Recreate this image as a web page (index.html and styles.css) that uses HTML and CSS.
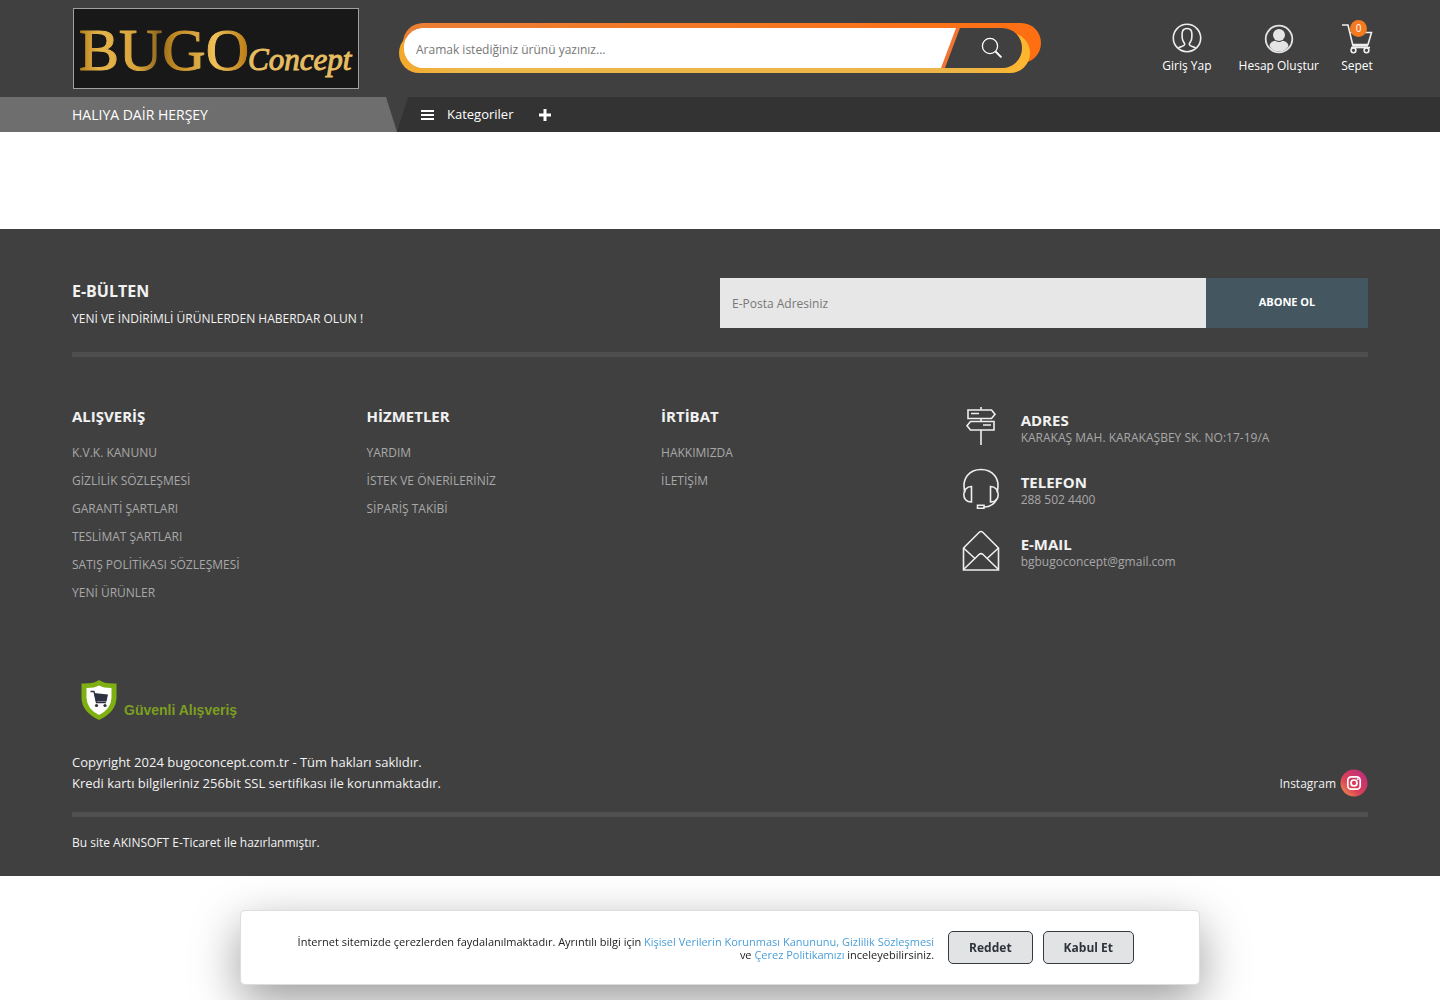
FILE: index.html
```
<!DOCTYPE html>
<html lang="tr">
<head>
<meta charset="utf-8">
<meta name="viewport" content="width=device-width, initial-scale=1">
<title>Bugo Concept</title>
<link rel="stylesheet" href="styles.css">
</head>
<body>
<header class="header">
  <a class="logo" href="#" aria-label="Bugo Concept">
    <svg viewBox="0 0 286 81" width="286" height="81">
      <defs>
        <linearGradient id="gold" x1="0" x2="1">
          <stop offset="0" stop-color="#b47d1c"/><stop offset=".12" stop-color="#e5b54c"/>
          <stop offset=".35" stop-color="#d9a43a"/><stop offset=".47" stop-color="#8f671f"/>
          <stop offset=".56" stop-color="#c08822"/><stop offset=".8" stop-color="#efc158"/>
          <stop offset="1" stop-color="#b87812"/>
        </linearGradient>
      </defs>
      <rect x=".5" y=".5" width="285" height="80" fill="#181818" stroke="#a0a0a0"/>
      <text class="logo-main" x="6" y="62" fill="url(#gold)" stroke="url(#gold)">BUGO</text>
      <text class="logo-sub" x="175" y="62" fill="#e6bd62" stroke="#e6bd62">Concept</text>
    </svg>
  </a>
  <form class="search">
    <div class="search-pill">
      <input class="search-input" type="text" aria-label="Ürün ara" placeholder="Aramak istediğiniz ürünü yazınız...">
      <button class="search-button" type="button" aria-label="Ara">
        <svg width="22" height="22" viewBox="0 0 22 22" fill="none" stroke="#fff" stroke-width="1.3"><circle cx="9" cy="9" r="7.6"/><path d="M14.4 14.4l6 6" stroke-width="2"/></svg>
      </button>
    </div>
  </form>
  <nav class="account" aria-label="Hesap">
    <a class="account-link" href="#">
      <svg width="30" height="32" viewBox="0 0 30 32" fill="none" stroke="#eee" stroke-width="1.6"><circle cx="15" cy="16" r="13.7"/><path d="M6.500 26c1.500-1.800 6-1.500 6.200-3.500.2-1.600-2.200-3-2.400-6C9.600 9.500 10.500 6.500 15 6.500s5.400 3 4.700 10c-.2 3-2.600 4.400-2.400 6 .2 2 4.700 1.700 6.200 3.500"/></svg>
      Giriş Yap
    </a>
    <a class="account-link" href="#">
      <svg width="30" height="32" viewBox="0 0 30 32"><circle cx="15" cy="17" r="13.300" fill="none" stroke="#e4e4e4" stroke-width="1.800"/><circle cx="15" cy="13" r="6" fill="#e4e4e4"/><path d="M5.500 24c.5-3.500 3-5 6-5.300q3.500 2.500 7 0c3 .3 5.500 1.800 6 5.300-2 4-6 5.500-9.500 5.500S7.500 28 5.500 24z" fill="#e4e4e4"/></svg>
      Hesap Oluştur
    </a>
    <a class="account-link cart" href="#">
      <svg width="34" height="32" viewBox="0 0 34 32" fill="none" stroke="#eee" stroke-width="1.600"><path d="M2 3h6l5 21h15M9.500 10.500h22l-3.500 12H12.500"/><path d="M11 25.500h19"/><circle cx="13.500" cy="28.300" r="2.400"/><circle cx="26.500" cy="28.300" r="2.400"/></svg>
      <span class="badge">0</span>
      Sepet
    </a>
  </nav>
</header>
<div class="menubar">
  <div class="slogan">HALIYA DAİR HERŞEY</div>
  <nav class="menu" aria-label="Kategoriler">
    <a class="menu-link" href="#">
      <svg width="13" height="12" viewBox="0 0 13 12" fill="none" stroke="#fff" stroke-width="2"><path d="M0 2h13M0 6h13M0 10h13"/></svg>
      Kategoriler
    </a>
    <a class="menu-more" href="#" aria-label="Tümü">
      <svg width="12" height="12" viewBox="0 0 12 12" fill="none" stroke="#fff" stroke-width="3"><path d="M0 6h12M6 0v12"/></svg>
    </a>
  </nav>
</div>
<main class="content"></main>
<footer class="footer">
  <section class="newsletter">
    <div>
      <h2 class="newsletter-title">E-BÜLTEN</h2>
      <p class="newsletter-text">YENİ VE İNDİRİMLİ ÜRÜNLERDEN HABERDAR OLUN !</p>
    </div>
    <form class="subscribe">
      <input class="subscribe-input" type="email" aria-label="E-Posta Adresiniz" placeholder="E-Posta Adresiniz">
      <button class="subscribe-button" type="button">ABONE OL</button>
    </form>
  </section>
  <div class="columns">
    <section>
      <h3 class="column-title">ALIŞVERİŞ</h3>
      <ul class="links">
        <li><a href="#">K.V.K. KANUNU</a></li>
        <li><a href="#">GİZLİLİK SÖZLEŞMESİ</a></li>
        <li><a href="#">GARANTİ ŞARTLARI</a></li>
        <li><a href="#">TESLİMAT ŞARTLARI</a></li>
        <li><a href="#">SATIŞ POLİTİKASI SÖZLEŞMESİ</a></li>
        <li><a href="#">YENİ ÜRÜNLER</a></li>
      </ul>
    </section>
    <section>
      <h3 class="column-title">HİZMETLER</h3>
      <ul class="links">
        <li><a href="#">YARDIM</a></li>
        <li><a href="#">İSTEK VE ÖNERİLERİNİZ</a></li>
        <li><a href="#">SİPARİŞ TAKİBİ</a></li>
      </ul>
    </section>
    <section>
      <h3 class="column-title">İRTİBAT</h3>
      <ul class="links">
        <li><a href="#">HAKKIMIZDA</a></li>
        <li><a href="#">İLETİŞİM</a></li>
      </ul>
    </section>
    <section class="contacts">
      <div class="contact">
        <svg width="38" height="42" viewBox="0 0 38 42" fill="none" stroke="#eee" stroke-width="1.600"><path d="M19 1v3M19 12.500v3M19 24v15"/><path d="M6 4h23.500l3.500 4.300-3.500 4.200H6zM32 15.500H8.500L5 19.700 8.500 24H32z"/><path d="M9 7.500h8M21 19h8"/></svg>
        <div><h4 class="contact-title">ADRES</h4><p class="contact-text">KARAKAŞ MAH. KARAKAŞBEY SK. NO:17-19/A</p></div>
      </div>
      <div class="contact">
        <svg width="38" height="42" viewBox="0 0 38 42" fill="none" stroke="#eee" stroke-width="1.600"><path d="M3 24.500C-1 10 8 1.500 19 1.500S39 10 35 24.500"/><path d="M9.500 18.500v15.500C4 34 1.800 30.500 1.800 26.500s2.700-8 7.700-8zM28.500 18.500v15.500c5.500 0 7.700-3.500 7.700-7.500s-2.700-8-7.700-8z"/><path d="M34.500 31c-2 5.500-6 7.800-12.500 8"/><path d="M15.500 37.200h6.500v3h-6.500z"/></svg>
        <div><h4 class="contact-title">TELEFON</h4><p class="contact-text">288 502 4400</p></div>
      </div>
      <div class="contact">
        <svg width="38" height="42" viewBox="0 0 38 42" fill="none" stroke="#eee" stroke-width="1.600"><path d="M1.500 18L17 2.500q2-2 4 0L36.500 18v22h-35z"/><path d="M1.500 18l12 11M36.500 18l-12 11M1.500 39.500L17 24.500q2-1.800 4 0l15.500 15"/></svg>
        <div><h4 class="contact-title">E-MAIL</h4><p class="contact-text">bgbugoconcept@gmail.com</p></div>
      </div>
    </section>
  </div>
  <div class="secure">
    <svg width="36" height="40" viewBox="0 0 36 40"><path d="M18 0q5 4 17.500 3.500V18Q35 32 18 40 1 32 .5 18V3.500Q13 4 18 0z" fill="#7fb011"/><path d="M18 5.500q4 2.500 12.500 2.500v10Q30 29 18 35 6 29 5.500 18V8Q14 8 18 5.500z" fill="#fff"/><path d="M9.500 11.500h3.500l2.500 11h9.500" fill="none" stroke="#2c3242" stroke-width="1.300"/><path d="M13 13L27 14.500l-1.500 7H15z" fill="#2c3242"/><circle cx="15.500" cy="25.500" r="1.600" fill="#2c3242"/><circle cx="24" cy="25.500" r="1.600" fill="#2c3242"/></svg>
    <span class="secure-text">Güvenli Alışveriş</span>
  </div>
  <div class="legal">
    <p class="copyright">Copyright 2024 bugoconcept.com.tr - Tüm hakları saklıdır.<br>Kredi kartı bilgileriniz 256bit SSL sertifikası ile korunmaktadır.</p>
    <a class="social" href="#">Instagram
      <svg width="28" height="28" viewBox="0 0 28 28"><defs><linearGradient id="insta" x1="0" y1="1" x2="1" y2="0"><stop offset="0" stop-color="#ee9a4c"/><stop offset=".4" stop-color="#dc4058"/><stop offset="1" stop-color="#b72a80"/></linearGradient></defs><circle cx="14" cy="14" r="13.500" fill="url(#insta)"/><g fill="none" stroke="#fff" stroke-width="1.700"><rect x="7.800" y="7.800" width="12.400" height="12.400" rx="3.500"/><circle cx="14" cy="14" r="3"/></g><circle cx="17.700" cy="10.300" r="1" fill="#fff"/></svg>
    </a>
  </div>
  <p class="credit">Bu site AKINSOFT E-Ticaret ile hazırlanmıştır.</p>
</footer>
<aside class="cookies" aria-label="Çerez bildirimi">
  <p class="cookies-text">İnternet sitemizde çerezlerden faydalanılmaktadır. Ayrıntılı bilgi için <a href="#">Kişisel Verilerin Korunması Kanununu, Gizlilik Sözleşmesi</a><br>ve <a href="#">Çerez Politikamızı</a> inceleyebilirsiniz.</p>
  <button class="cookies-button" type="button">Reddet</button>
  <button class="cookies-button" type="button">Kabul Et</button>
</aside>
</body>
</html>
```
FILE: styles.css
```
* { box-sizing: border-box; }
body {
  margin: 0;
  background: #fff;
  color: #f2f2f2;
  font: 13px/21px "Open Sans", "Noto Sans", sans-serif;
}
h2, h3, h4, p, ul { margin: 0; padding: 0; }
ul { list-style: none; }
a { color: inherit; text-decoration: none; }
svg { display: block; flex: none; }
input, button { font-family: inherit; border: 0; margin: 0; }

.header {
  display: flex;
  align-items: flex-start;
  height: 97px;
  padding: 8px 5% 0;
  background: #404040;
}
.logo { flex: none; margin-left: 1px; }
.logo-main { font: 60px "Liberation Serif", serif; stroke-width: 1px; }
.logo-sub { font: italic 31px "Liberation Serif", serif; stroke-width: 1px; }

/* Two offset pills behind the field: orange up right, yellow down left */
.search {
  display: grid;
  flex: 1;
  max-width: 642px;
  height: 50px;
  margin: 15px 0 0 40px;
}
.search::before, .search::after, .search-pill { grid-area: 1 / 1; border-radius: 25px; }
.search::before, .search::after { content: ""; height: 40px; }
.search::before { margin-left: 4px; background: linear-gradient(90deg, #ea7f35, #ff6f12); }
.search::after { margin: 10px 11px 0 0; background: linear-gradient(90deg, #f4a82a, #edb84a 10%, #edb545 90%, #ffb62e); }
.search-pill {
  z-index: 1;
  display: flex;
  height: 40px;
  margin: 5px 19px 0 5px;
  overflow: hidden;
  background: linear-gradient(90deg, #fff 50%, #f07434 50%);
}
.search-input {
  flex: 1;
  min-width: 0;
  padding: 2px 12px 0;
  background: #fff;
  color: #333;
  font-size: 12px;
  outline: 0;
  clip-path: polygon(0 0, calc(100% - 2px) 0, calc(100% - 17px) 100%, 0 100%);
}
.search-input::placeholder, .subscribe-input::placeholder { color: #777; opacity: 1; }
.search-button {
  display: flex;
  width: 80px;
  margin-left: -16px;
  padding: 0 0 0 39px;
  align-items: center;
  background: #404040;
  clip-path: polygon(18px 0, 100% 0, 100% 100%, 3px 100%);
}

.account { display: flex; gap: 21px; margin: 14px -6px 0 auto; }
.account-link {
  display: flex;
  flex-direction: column;
  align-items: center;
  gap: 1px;
  color: #fff;
  font-size: 12px;
  white-space: nowrap;
}
.account-link:first-child { margin-right: 6px; }
.cart { position: relative; }
.badge {
  position: absolute;
  top: -2px;
  left: 10px;
  width: 17px;
  height: 17px;
  border-radius: 50%;
  background: #f47a20;
  font-size: 10px;
  line-height: 17px;
  text-align: center;
}

.menubar { display: flex; height: 35px; background: #404040; color: #fff; }
.slogan {
  width: 397px;
  padding-left: 5%;
  background: #6e6e6e;
  font-size: 14px;
  line-height: 35px;
  clip-path: polygon(0 0, calc(100% - 11px) 0, 100% 100%, 0 100%);
}
.menu {
  display: flex;
  flex: 1;
  align-items: center;
  gap: 25px;
  padding-left: 24px;
  background: #333;
  clip-path: polygon(11px 0, 100% 0, 100% 100%, 0 100%);
}
.menu-link { display: flex; align-items: center; gap: 13px; font-size: 13px; }

.content { min-height: 97px; }

.footer { padding: 49px 5% 23px; background: #404040; }
.newsletter {
  display: grid;
  grid-template-columns: 1fr 1fr;
  padding-bottom: 23px;
  border-bottom: 5px solid #4e4e4e;
}
.newsletter-title { font-size: 16px; line-height: 26px; }
.newsletter-text { margin-top: 4px; font-size: 12px; }
.subscribe { display: flex; height: 50px; }
.subscribe-input {
  flex: 1;
  min-width: 0;
  padding: 0 12px;
  border-radius: 0;
  background: #e7e7e7;
  color: #333;
  font-size: 12px;
}
.subscribe-button {
  width: 25%;
  padding: 0 0 3px;
  background: #445660;
  color: #fff;
  font-size: 11px;
  font-weight: 700;
}

.columns {
  display: grid;
  grid-template-columns: 5fr 5fr 5fr 7fr;
  min-height: 323px;
  padding-top: 47px;
}
.column-title { margin-bottom: 10px; font-size: 15px; line-height: 25px; }
.links { color: #a8a8a8; font-size: 12px; line-height: 28px; }
.contacts { display: flex; flex-direction: column; gap: 20px; padding: 2px 0 0 6px; }
.contact { display: flex; gap: 21px; }
.contact-title { padding-top: 5px; font-size: 15px; line-height: 19px; }
.contact-text { color: #a8a8a8; font-size: 12px; line-height: 16px; }

.secure { display: flex; align-items: flex-end; gap: 7px; height: 40px; padding-left: 9px; }
.secure-text { color: #7c9f20; font: bold 14px/20px "Liberation Sans Narrow", "Liberation Sans", sans-serif; }
.legal {
  display: flex;
  align-items: flex-end;
  justify-content: space-between;
  padding: 32px 0 15px;
  border-bottom: 5px solid #505050;
}
.copyright { padding-bottom: 3px; font-size: 13px; }
.social { display: flex; align-items: center; gap: 4px; font-size: 12px; }
.credit { margin-top: 15px; font-size: 12px; }

.cookies {
  position: fixed;
  right: 0;
  bottom: 15px;
  left: 0;
  display: flex;
  align-items: center;
  justify-content: flex-end;
  width: 960px;
  max-width: 100%;
  height: 75px;
  margin: 0 auto;
  padding-right: 65px;
  border: 1px solid #ddd;
  border-radius: 5px;
  background: #fff;
  box-shadow: 0 16px 48px rgba(0, 0, 0, .4);
  color: #222;
}
.cookies-text { margin-right: 14px; font-size: 11px; line-height: 13px; text-align: right; }
.cookies-text a { color: #4a9fd8; }
.cookies-button {
  height: 33px;
  padding: 0 20px;
  border: 1px solid #343a40;
  border-radius: 5px;
  background: #e2e3e5;
  color: #2f343a;
  font-size: 12px;
  font-weight: 700;
}
.cookies-button + .cookies-button { margin-left: 10px; }
```
